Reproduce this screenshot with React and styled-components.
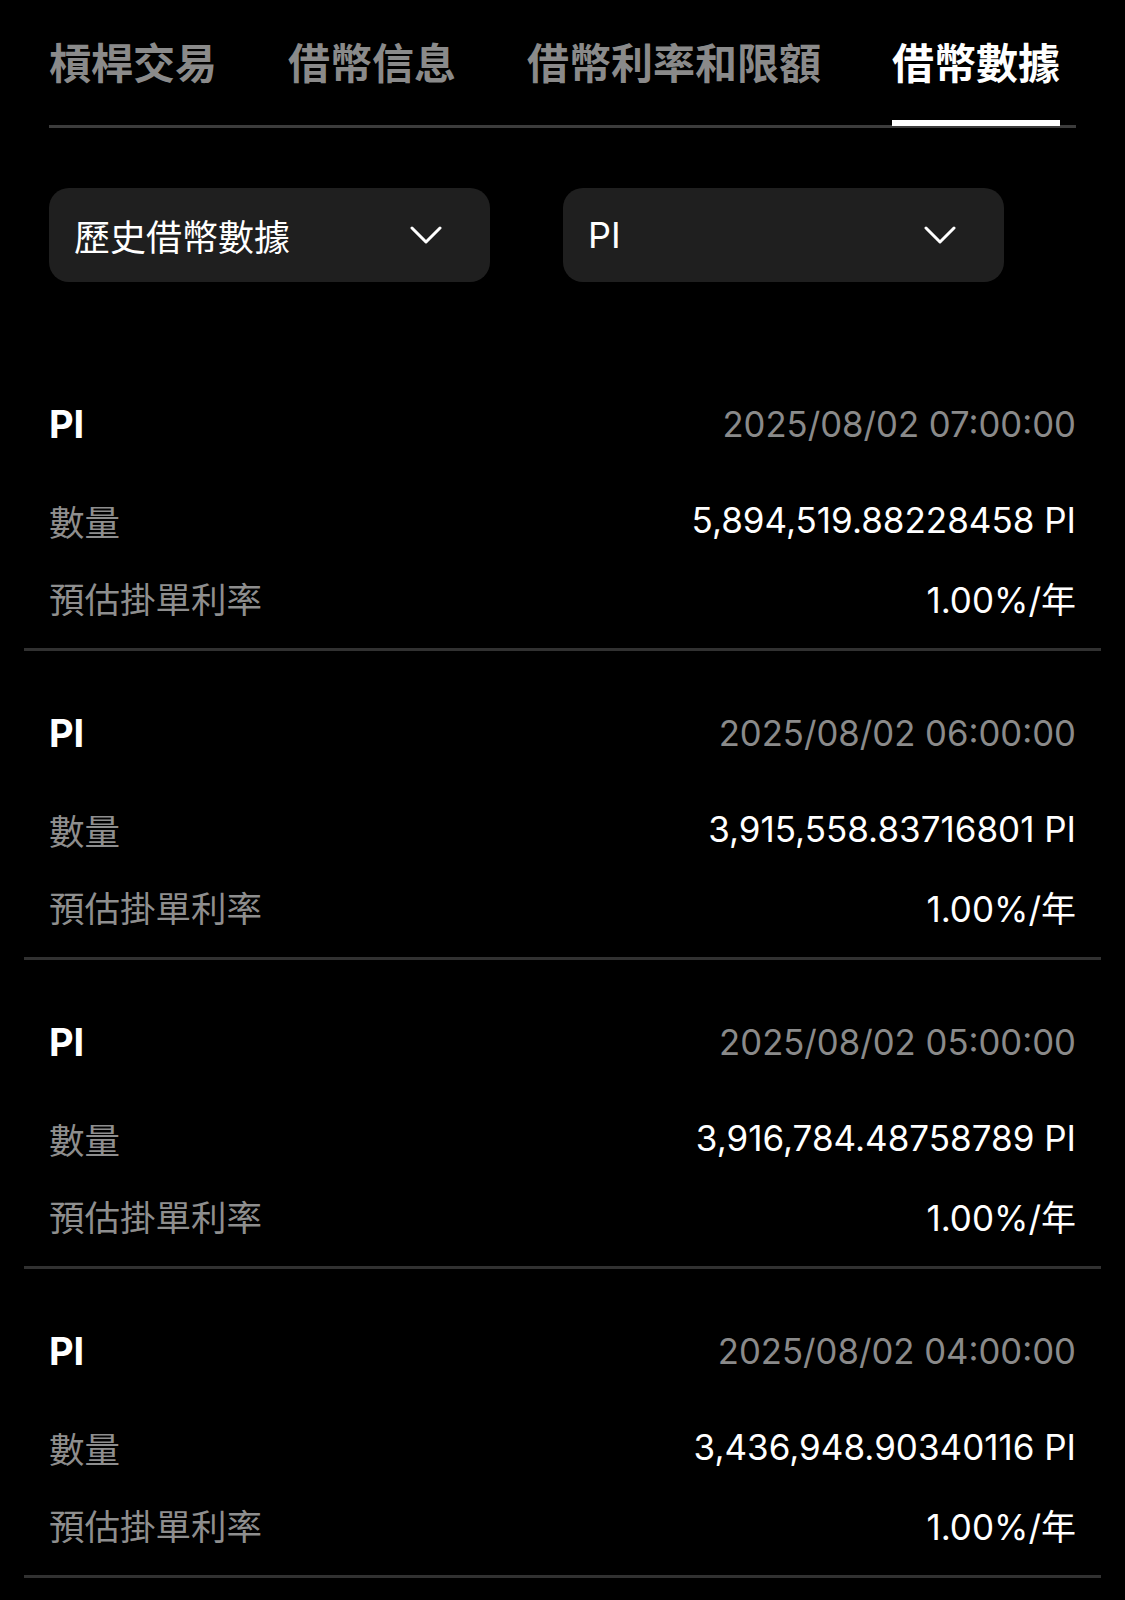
import React from "react"
import styled, { createGlobalStyle } from "styled-components"

const GlobalStyle = createGlobalStyle`
    html, body {
        margin: 0;
        padding: 0;
        background: #000;
    }
    body {
        font-family: Inter, "Noto Sans CJK TC", sans-serif;
        color: #fff;
    }
`;

const Page = styled.div`
    width: 1125px;
    min-height: 1600px;
    background: #000;
    overflow: hidden;
`;

const TabBar = styled.div`
    display: flex;
    gap: 71px;
    margin: 0 49px;
    padding-top: 36px;
    border-bottom: 3px solid #3c3c3c;
`;

const Tab = styled.div`
    font-size: 42px;
    line-height: 56px;
    font-weight: 700;
    color: ${(p) => (p.$active ? "#fff" : "#8a8a8a")};
    padding-bottom: 28px;
    border-bottom: 6px solid ${(p) => (p.$active ? "#fff" : "transparent")};
    margin-bottom: -1px;
    white-space: nowrap;
`;

const SelectRow = styled.div`
    display: flex;
    gap: 73px;
    padding: 0 49px;
    margin-top: 60px;
`;

const Select = styled.div`
    width: 441px;
    height: 94px;
    box-sizing: border-box;
    border-radius: 20px;
    background: #1f1f1f;
    display: flex;
    align-items: center;
    justify-content: space-between;
    padding: 0 48px 0 25px;
    font-size: 36px;
    color: #fff;
`;

const List = styled.div`
    margin-top: 60px;
    padding: 0 24px;
`;

const Card = styled.div`
    padding: 57px 25px 26px;
    border-bottom: 3px solid #313131;
`;

const Row = styled.div`
    display: flex;
    justify-content: space-between;
    align-items: center;
    height: 50px;
    margin-top: ${(p) => p.$gap || 0}px;
`;

const Coin = styled.span`
    font-size: 38px;
    font-weight: 700;
    color: #fff;
`;

const Time = styled.span`
    font-size: 34.7px;
    color: #8a8a8a;
`;

const Label = styled.span`
    font-size: 35.5px;
    color: #8e8e8e;
`;

const Value = styled.span`
    font-size: 35px;
    color: #fff;
`;

function Chevron() {
    return (
        <svg width="32" height="18" viewBox="0 0 32 18" fill="none">
            <path d="M2 2 L16 16 L30 2" stroke="#fff" strokeWidth="3" strokeLinecap="round" strokeLinejoin="round" />
        </svg>
    );
}

const tabs = ["槓桿交易", "借幣信息", "借幣利率和限額", "借幣數據"];

const records = [
    { time: "2025/08/02 07:00:00", amount: "5,894,519.88228458 PI" },
    { time: "2025/08/02 06:00:00", amount: "3,915,558.83716801 PI" },
    { time: "2025/08/02 05:00:00", amount: "3,916,784.48758789 PI" },
    { time: "2025/08/02 04:00:00", amount: "3,436,948.90340116 PI" },
];

function RecordCard({ record }) {
    return (
        <Card>
            <Row>
                <Coin>PI</Coin>
                <Time>{record.time}</Time>
            </Row>
            <Row $gap={46}>
                <Label>數量</Label>
                <Value>{record.amount}</Value>
            </Row>
            <Row $gap={27}>
                <Label>預估掛單利率</Label>
                <Value>1.00%/年</Value>
            </Row>
        </Card>
    );
}

export default function App() {
    return (
        <Page>
            <GlobalStyle />
            <TabBar>
                {tabs.map((t, i) => (
                    <Tab key={t} $active={i === tabs.length - 1}>{t}</Tab>
                ))}
            </TabBar>
            <SelectRow>
                <Select>
                    <span>歷史借幣數據</span>
                    <Chevron />
                </Select>
                <Select>
                    <span>PI</span>
                    <Chevron />
                </Select>
            </SelectRow>
            <List>
                {records.map((r) => (
                    <RecordCard key={r.time} record={r} />
                ))}
            </List>
        </Page>
    );
}
